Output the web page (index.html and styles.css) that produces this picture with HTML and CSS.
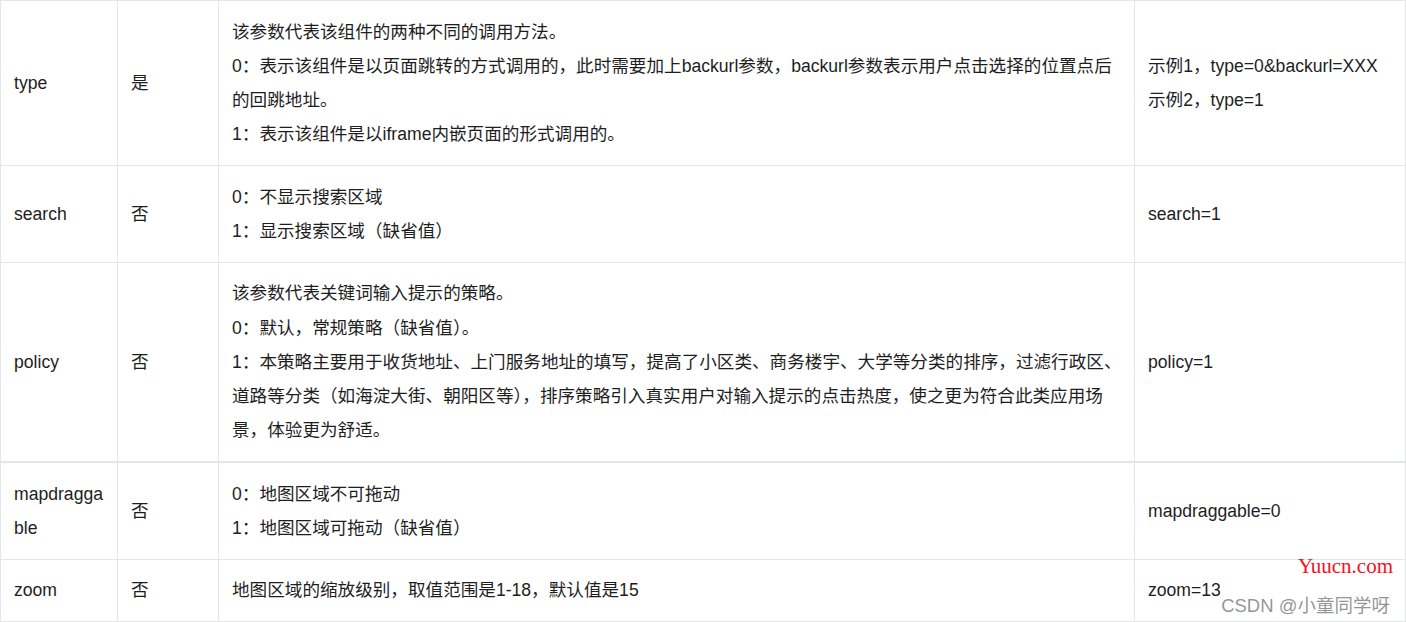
FILE: index.html
```html
<!DOCTYPE html>
<html lang="zh-CN">
<head>
    <meta charset="UTF-8">
    <meta name="viewport" content="width=device-width, initial-scale=1.0">
    <title>参数说明</title>
    <link rel="stylesheet" href="styles.css">
</head>
<body>
    <div class="page">
        <table class="params">
            <colgroup>
                <col class="col-name">
                <col class="col-req">
                <col class="col-desc">
                <col class="col-example">
            </colgroup>
            <tr>
                <td>type</td>
                <td>是</td>
                <td class="desc">该参数代表该组件的两种不同的调用方法。<br>0：表示该组件是以页面跳转的方式调用的，此时需要加上backurl参数，backurl参数表示用户点击选择的位置点后的回跳地址。<br>1：表示该组件是以iframe内嵌页面的形式调用的。</td>
                <td>示例1，type=0&amp;backurl=XXX<br>示例2，type=1</td>
            </tr>
            <tr>
                <td>search</td>
                <td>否</td>
                <td class="desc">0：不显示搜索区域<br>1：显示搜索区域（缺省值）</td>
                <td>search=1</td>
            </tr>
            <tr class="thick">
                <td>policy</td>
                <td>否</td>
                <td class="desc">该参数代表关键词输入提示的策略。<br>0：默认，常规策略（缺省值）。<br>1：本策略主要用于收货地址、上门服务地址的填写，提高了小区类、商务楼宇、大学等分类的排序，过滤行政区、道路等分类（如海淀大街、朝阳区等），排序策略引入真实用户对输入提示的点击热度，使之更为符合此类应用场景，体验更为舒适。</td>
                <td>policy=1</td>
            </tr>
            <tr>
                <td>mapdraggable</td>
                <td>否</td>
                <td class="desc">0：地图区域不可拖动<br>1：地图区域可拖动（缺省值）</td>
                <td>mapdraggable=0</td>
            </tr>
            <tr>
                <td>zoom</td>
                <td>否</td>
                <td class="desc">地图区域的缩放级别，取值范围是1-18，默认值是15</td>
                <td>zoom=13</td>
            </tr>
        </table>
        <div class="mark-site">Yuucn.com</div>
        <div class="mark-author">CSDN @小童同学呀</div>
    </div>
</body>
</html>
```

FILE: styles.css
```css
body {
    margin: 0;
    background: #fff;
    font-family: "Liberation Sans", "Noto Sans CJK SC", sans-serif;
    font-size: 17.6px;
    color: #1e1e1e;
}
.page {
    position: relative;
    width: 1406px;
    height: 622px;
    overflow: hidden;
}
.params {
    width: 1406px;
    border-collapse: collapse;
    table-layout: fixed;
}
.col-name {
    width: 117px;
}
.col-req {
    width: 101px;
}
.col-desc {
    width: 916px;
}
.params td {
    border: 1px solid #e4e6eb;
    padding: 13.5px 13px;
    line-height: 34.3px;
    vertical-align: middle;
    word-break: break-all;
}
.params td.desc {
    padding-right: 10px;
}
.params tr.thick td {
    border-bottom: 2px solid #e4e6eb;
}
.mark-site {
    position: absolute;
    right: 13px;
    top: 554px;
    font-family: "Liberation Serif", serif;
    font-size: 21px;
    color: #f5101e;
}
.mark-author {
    position: absolute;
    right: 16px;
    top: 591px;
    font-size: 18.5px;
    color: rgba(130, 130, 130, 0.85);
}
```
